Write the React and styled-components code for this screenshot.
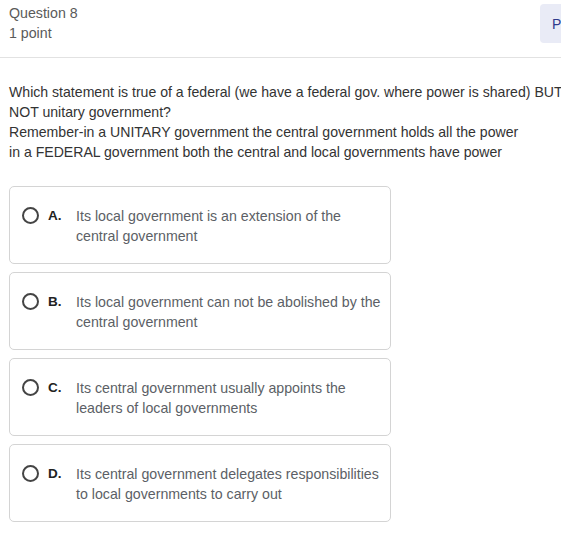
import React from 'react';
import styled, { createGlobalStyle } from 'styled-components';

const GlobalStyle = createGlobalStyle`
    body {
        margin: 0;
        background: #fff;
        font-family: "Liberation Sans", Arial, sans-serif;
        overflow: hidden;
    }
`;

const Page = styled.div`
    width: 561px;
    height: 554px;
    overflow: hidden;
`;

const Header = styled.div`
    display: flex;
    justify-content: space-between;
    align-items: flex-start;
    height: 58px;
    border-bottom: 1px solid #e2e2e2;
    box-sizing: border-box;
    padding: 3px 0 0 9px;
`;

const Meta = styled.div`
    font-size: 14.2px;
    line-height: 20px;
    color: #5a5a5a;
`;

const PrintButton = styled.button`
    margin: 1px -40px 0 0;
    width: 61px;
    height: 39px;
    border: none;
    border-radius: 4px;
    background: #e9ebf6;
    color: #2f3a8c;
    font-family: inherit;
    font-size: 14px;
    text-align: left;
    padding: 0 0 0 12px;
`;

const Body = styled.div`
    padding: 24px 0 0 9px;
`;

const Prompt = styled.div`
    font-size: 14.1px;
    line-height: 20px;
    color: #333;
    white-space: nowrap;
`;

const Options = styled.div`
    display: flex;
    flex-direction: column;
    gap: 8px;
    margin-top: 24px;
    width: 382px;
`;

const Card = styled.label`
    display: flex;
    align-items: flex-start;
    box-sizing: border-box;
    height: 78px;
    padding: 18px 8px 0 12px;
    border: 1px solid #d4d4d4;
    border-radius: 5px;
`;

const Radio = styled.span`
    flex: none;
    width: 13px;
    height: 13px;
    border: 2px solid #444;
    border-radius: 50%;
    margin-top: 2px;
`;

const Letter = styled.span`
    flex: none;
    width: 28px;
    margin-left: 9px;
    margin-top: 1px;
    font-size: 13.5px;
    font-weight: bold;
    line-height: 20px;
    color: #222;
`;

const Answer = styled.span`
    font-size: 14.2px;
    line-height: 20px;
    color: #5c5f66;
    margin-top: 1px;
`;

const options = [
    ['A.', 'Its local government is an extension of the', 'central government'],
    ['B.', 'Its local government can not be abolished by the', 'central government'],
    ['C.', 'Its central government usually appoints the', 'leaders of local governments'],
    ['D.', 'Its central government delegates responsibilities', 'to local governments to carry out'],
];

export default function App() {
    return (
        <Page>
            <GlobalStyle />
            <Header>
                <Meta>
                    <div>Question 8</div>
                    <div>1 point</div>
                </Meta>
                <PrintButton>Print</PrintButton>
            </Header>
            <Body>
                <Prompt>
                    Which statement is true of a federal (we have a federal gov. where power is shared) BUT<br />
                    NOT unitary government?<br />
                    Remember-in a UNITARY government the central government holds all the power<br />
                    in a FEDERAL government both the central and local governments have power
                </Prompt>
                <Options>
                    {options.map(([letter, l1, l2]) => (
                        <Card key={letter}>
                            <Radio />
                            <Letter>{letter}</Letter>
                            <Answer>{l1}<br />{l2}</Answer>
                        </Card>
                    ))}
                </Options>
            </Body>
        </Page>
    );
}
